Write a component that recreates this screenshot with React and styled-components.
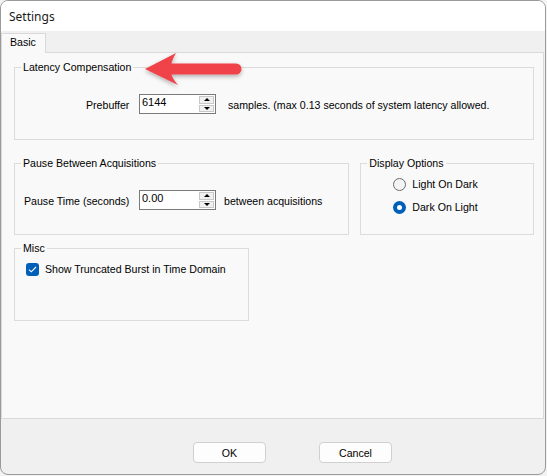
import styled, { createGlobalStyle } from "styled-components";

const Global = createGlobalStyle`
  html, body {
    margin: 0;
    padding: 0;
    background: #f3f3f3;
  }
  * {
    box-sizing: border-box;
  }
`;

const Window = styled.div`
  position: relative;
  width: 546px;
  height: 475px;
  border: 1px solid #9a9a9a;
  border-radius: 8px;
  overflow: hidden;
  background: #f0f0f0;
  font-family: "Liberation Sans", Arial, sans-serif;
  font-size: 10.6px;
  color: #000;
`;

const TitleBar = styled.div`
  height: 30px;
  background: #ffffff;
  display: flex;
  align-items: center;
  padding-left: 8px;
  font-family: "Noto Sans", "Open Sans", sans-serif;
  font-size: 12px;
  color: #1a1a1a;
`;

const Body = styled.div`
  padding-top: 2px;
`;

const TabStrip = styled.div`
  display: flex;
  height: 19px;
  position: relative;
  z-index: 1;
`;

const Tab = styled.div`
  width: 45px;
  height: 20px;
  border: 1px solid #d9d9d9;
  border-bottom: none;
  background: #f9f9f9;
  padding: 2px 0 0 8px;
`;

const TabPage = styled.div`
  height: 367px;
  margin-right: 1px;
  border: 1px solid #d9d9d9;
  background: #f9f9f9;
  padding: 8px 9px 0 12px;
  display: flex;
  flex-direction: column;
`;

const Group = styled.fieldset`
  margin: 0;
  margin-top: ${(p) => p.$top || 0}px;
  padding: 0 6px;
  border: 1px solid #dcdcdc;
  width: ${(p) => p.$w}px;
  height: ${(p) => p.$h}px;
  min-width: 0;
`;

const Legend = styled.legend`
  padding: 0 2px;
  line-height: 13px;
`;

const GroupRow = styled.div`
  display: flex;
  gap: 11px;
  margin-top: 17px;
`;

const FieldRow = styled.div`
  display: flex;
  align-items: center;
  height: 20px;
  margin-top: ${(p) => p.$top}px;
  padding-left: ${(p) => p.$indent}px;
`;

const Label = styled.span`
  width: ${(p) => p.$w}px;
  flex: none;
  padding-top: 1px;
`;

const Suffix = styled.span`
  margin-left: ${(p) => p.$gap}px;
  padding-top: 1px;
  white-space: nowrap;
`;

const SpinBox = styled.div`
  width: 77px;
  height: ${(p) => p.$h}px;
  border: 1px solid #7a7a7a;
  background: #fff;
  display: flex;
  justify-content: space-between;
  flex: none;
`;

const SpinValue = styled.span`
  padding: 1px 0 0 2px;
  line-height: 13px;
  font-size: 11px;
`;

const SpinButtons = styled.div`
  width: 16px;
  display: flex;
  flex-direction: column;
  padding: 1px 1px 1px 0;
  gap: 1px;
`;

const SpinButton = styled.div`
  flex: 1;
  background: #f0f0f0;
  border: 1px solid #c8c8c8;
  display: flex;
  align-items: center;
  justify-content: center;
  &::after {
    content: "";
    border-left: 3px solid transparent;
    border-right: 3px solid transparent;
    ${(p) =>
      p.$down
        ? "border-top: 3px solid #000;"
        : "border-bottom: 3px solid #000;"}
  }
`;

const OptionRow = styled.label`
  display: flex;
  align-items: center;
  gap: 6px;
  height: 16px;
  margin-top: ${(p) => p.$top}px;
  padding-left: ${(p) => p.$indent}px;
`;

const Radio = styled.span`
  width: 13px;
  height: 13px;
  border-radius: 50%;
  flex: none;
  border: ${(p) => (p.$on ? "none" : "1px solid #6b6b6b")};
  background: ${(p) => (p.$on ? "#005fb8" : "#f4f4f4")};
  display: flex;
  align-items: center;
  justify-content: center;
  &::after {
    content: "";
    width: 5px;
    height: 5px;
    border-radius: 50%;
    background: #fff;
    display: ${(p) => (p.$on ? "block" : "none")};
  }
`;

const Check = styled.span`
  width: 13px;
  height: 13px;
  border-radius: 3px;
  background: #005fb8;
  flex: none;
  display: flex;
  align-items: center;
  justify-content: center;
`;

const Footer = styled.div`
  display: flex;
  gap: 53px;
  padding: 23px 0 0 192px;
`;

const Button = styled.button`
  width: 73px;
  height: 21px;
  border: 1px solid #d0d0d0;
  border-radius: 4px;
  background: #fdfdfd;
  font-family: "Liberation Sans", Arial, sans-serif;
  font-size: 10.6px;
  color: #000;
  padding: 0;
`;

const Arrow = styled.svg`
  position: absolute;
  left: 140px;
  top: 46px;
`;

export default function App() {
  return (
    <>
      <Global />
      <Window>
        <TitleBar>Settings</TitleBar>
        <Body>
          <TabStrip>
            <Tab>Basic</Tab>
          </TabStrip>
          <TabPage>
            <Group $w={520} $h={79}>
              <Legend>Latency Compensation</Legend>
              <FieldRow $top={20} $indent={65}>
                <Label $w={53}>Prebuffer</Label>
                <SpinBox $h={20}>
                  <SpinValue>6144</SpinValue>
                  <SpinButtons>
                    <SpinButton />
                    <SpinButton $down />
                  </SpinButtons>
                </SpinBox>
                <Suffix $gap={12}>
                  samples. (max 0.13 seconds of system latency allowed.
                </Suffix>
              </FieldRow>
            </Group>

            <GroupRow>
              <Group $w={336} $h={78}>
                <Legend>Pause Between Acquisitions</Legend>
                <FieldRow $top={20} $indent={3}>
                  <Label $w={115}>Pause Time (seconds)</Label>
                  <SpinBox $h={20}>
                    <SpinValue>0.00</SpinValue>
                    <SpinButtons>
                      <SpinButton />
                      <SpinButton $down />
                    </SpinButtons>
                  </SpinBox>
                  <Suffix $gap={8}>between acquisitions</Suffix>
                </FieldRow>
              </Group>
              <Group $w={174} $h={78}>
                <Legend>Display Options</Legend>
                <OptionRow $top={6} $indent={26}>
                  <Radio />
                  Light On Dark
                </OptionRow>
                <OptionRow $top={7} $indent={26}>
                  <Radio $on />
                  Dark On Light
                </OptionRow>
              </Group>
            </GroupRow>

            <Group $w={235} $h={79} $top={7}>
              <Legend>Misc</Legend>
              <OptionRow $top={6} $indent={5}>
                <Check>
                  <svg width="9" height="7" viewBox="0 0 9 7">
                    <path
                      d="M1 3.6 L3.3 5.8 L8 1"
                      fill="none"
                      stroke="#fff"
                      strokeWidth="1.1"
                    />
                  </svg>
                </Check>
                Show Truncated Burst in Time Domain
              </OptionRow>
            </Group>
          </TabPage>
          <Footer>
            <Button>OK</Button>
            <Button>Cancel</Button>
          </Footer>
        </Body>
        <Arrow width="112" height="46" viewBox="0 0 112 46">
          <defs>
            <filter id="sh" x="-20%" y="-40%" width="140%" height="180%">
              <feDropShadow dx="0" dy="2" stdDeviation="2" floodOpacity="0.3" />
            </filter>
          </defs>
          <path
            d="M4 22 L35 6 Q31 13 30.5 16.5 L95 16.5 A5.5 5.5 0 0 1 95 27.5 L30.5 27.5 Q31 31 37 38 Z"
            fill="#ef434a"
            filter="url(#sh)"
          />
        </Arrow>
      </Window>
    </>
  );
}
